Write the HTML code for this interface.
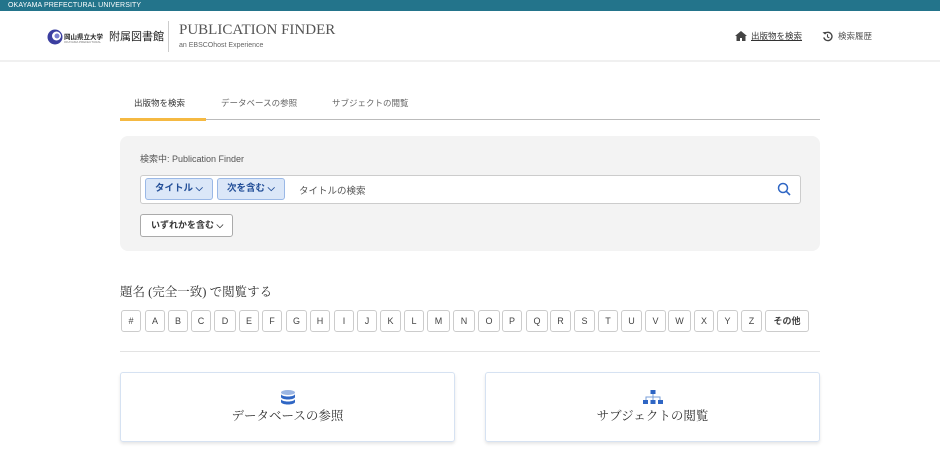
<!DOCTYPE html>
<html><head><meta charset="utf-8"><style>
*{box-sizing:border-box;margin:0;padding:0}
body{width:940px;height:460px;overflow:hidden;background:#fff;font-family:"Liberation Sans","Noto Sans CJK JP",sans-serif;color:#333;position:relative}
.top{height:11px;background:#23748b;color:#fff;font-size:7px;line-height:11px;padding-left:8px;letter-spacing:.1px}
.hdr{position:absolute;top:11px;left:0;width:940px;height:51px;border-bottom:2px solid #f0f0f0}
.ab{position:absolute}
.lt{position:absolute;top:310px;height:22px;border:1px solid #ccc;border-radius:3px;font-size:9px;color:#444;line-height:20px;text-align:center}
.pill{position:absolute;top:178px;height:22px;background:#dbe7f8;border:1px solid #9ab8e6;border-radius:3px;font-size:9.5px;color:#234f98;font-weight:bold;line-height:20px;padding-left:9px}
.card{position:absolute;top:372px;height:70px;border:1px solid #d6e2f2;border-radius:3px;box-shadow:0 2px 3px rgba(0,0,0,.1);text-align:center;font-family:"Liberation Serif","Noto Serif CJK SC",serif;font-size:12.5px;color:#333}
</style></head><body>
<div class="top">OKAYAMA PREFECTURAL UNIVERSITY</div>
<div class="hdr">
 <svg class="ab" style="left:47px;top:18px" width="16" height="16"><circle cx="8" cy="8" r="7.5" fill="#3b3ea0"/><circle cx="9.5" cy="7" r="4.5" fill="#fff"/><circle cx="10" cy="7" r="2.5" fill="#7a7fd0"/></svg>
 <div class="ab" style="left:64px;top:20px;font-size:6.5px;font-weight:bold;color:#222;white-space:nowrap">岡山県立大学</div>
 <div class="ab" style="left:64px;top:29px;font-size:3px;color:#777;white-space:nowrap">OKAYAMA PREFECTURAL</div>
 <div class="ab" style="left:109px;top:17px;font-size:11px;color:#222;white-space:nowrap">附属図書館</div>
 <div class="ab" style="left:168px;top:10px;width:1px;height:31px;background:#ccc"></div>
 <div class="ab" style="left:179px;top:11px;font-family:'Liberation Serif',serif;font-size:15px;color:#555;white-space:nowrap">PUBLICATION FINDER</div>
 <div class="ab" style="left:179px;top:31px;font-size:7px;color:#666">an EBSCOhost Experience</div>
 <svg class="ab" style="left:735px;top:20px" width="12" height="10" viewBox="0 0 12 10"><path d="M6 0L0 5h1.5v5h3.5V7h2v3h3.5V5H12z" fill="#444"/></svg>
 <div class="ab" style="left:751px;top:19px;font-size:8.5px;color:#333;text-decoration:underline">出版物を検索</div>
 <svg class="ab" style="left:822px;top:20px" width="11" height="11" viewBox="0 0 12 12"><path d="M3 3A4.5 4.5 0 1 1 2 7" stroke="#444" stroke-width="1.5" fill="none"/><path d="M0.5 1.5L3.5 4L4 1z" fill="#444"/><path d="M6 3.5V6.5L8 7.5" stroke="#444" stroke-width="1.2" fill="none"/></svg>
 <div class="ab" style="left:838px;top:19px;font-size:8.5px;color:#555">検索履歴</div>
</div>
<div class="ab" style="left:134px;top:97px;font-size:8.5px;color:#333">出版物を検索</div>
<div class="ab" style="left:221px;top:97px;font-size:8.5px;color:#666">データベースの参照</div>
<div class="ab" style="left:332px;top:97px;font-size:8.5px;color:#666">サブジェクトの閲覧</div>
<div class="ab" style="left:120px;top:119px;width:700px;height:1px;background:#bbb"></div>
<div class="ab" style="left:120px;top:118px;width:86px;height:3px;background:#f5b942"></div>
<div class="ab" style="left:120px;top:136px;width:700px;height:115px;background:#f3f3f3;border-radius:8px"></div>
<div class="ab" style="left:140px;top:152px;font-size:9px;color:#555">検索中: Publication Finder</div>
<div class="ab" style="left:140px;top:175px;width:661px;height:29px;background:#fff;border:1px solid #ccc;border-radius:3px"></div>
<div class="pill" style="left:145px;width:68px">タイトル ⌵</div>
<div class="pill" style="left:217px;width:68px">次を含む ⌵</div>
<div class="ab" style="left:299px;top:183px;font-size:9.5px;color:#555">タイトルの検索</div>
<svg class="ab" style="left:777px;top:182px" width="14" height="14" viewBox="0 0 14 14"><circle cx="6" cy="6" r="4.5" stroke="#2f66c4" stroke-width="1.5" fill="none"/><path d="M9.3 9.3L13 13" stroke="#2f66c4" stroke-width="1.6"/></svg>
<div class="ab" style="left:140px;top:214px;width:93px;height:23px;background:#fff;border:1px solid #aaa;border-radius:3px;font-size:9px;font-weight:bold;color:#333;line-height:21px;padding-left:10px">いずれかを含む ⌵</div>
<div class="ab" style="left:120px;top:282px;font-family:'Liberation Serif','Noto Serif CJK SC',serif;font-size:12.5px;color:#333">題名 (完全一致) で閲覧する</div>
<div class="lt" style="left:121px;width:20px">#</div>
<div class="lt" style="left:145px;width:20px">A</div>
<div class="lt" style="left:168px;width:20px">B</div>
<div class="lt" style="left:191px;width:20px">C</div>
<div class="lt" style="left:214px;width:22px">D</div>
<div class="lt" style="left:239px;width:20px">E</div>
<div class="lt" style="left:262px;width:20px">F</div>
<div class="lt" style="left:286px;width:21px">G</div>
<div class="lt" style="left:310px;width:20px">H</div>
<div class="lt" style="left:334px;width:20px">I</div>
<div class="lt" style="left:357px;width:20px">J</div>
<div class="lt" style="left:380px;width:21px">K</div>
<div class="lt" style="left:404px;width:20px">L</div>
<div class="lt" style="left:427px;width:23px">M</div>
<div class="lt" style="left:453px;width:22px">N</div>
<div class="lt" style="left:478px;width:22px">O</div>
<div class="lt" style="left:502px;width:20px">P</div>
<div class="lt" style="left:526px;width:22px">Q</div>
<div class="lt" style="left:550px;width:21px">R</div>
<div class="lt" style="left:574px;width:21px">S</div>
<div class="lt" style="left:598px;width:20px">T</div>
<div class="lt" style="left:621px;width:21px">U</div>
<div class="lt" style="left:645px;width:21px">V</div>
<div class="lt" style="left:668px;width:23px">W</div>
<div class="lt" style="left:694px;width:20px">X</div>
<div class="lt" style="left:717px;width:21px">Y</div>
<div class="lt" style="left:741px;width:21px">Z</div>
<div class="lt" style="left:765px;width:44px;font-weight:bold">その他</div>
<div class="ab" style="left:120px;top:351px;width:700px;height:1px;background:#e3e3e3"></div>
<div class="card" style="left:120px;width:335px">
 <svg style="position:absolute;left:160px;top:17px" width="14" height="15" viewBox="0 0 14 15"><ellipse cx="7" cy="2.5" rx="7" ry="2.5" fill="#9bb6e3"/><path d="M0 4v3c0 1.4 3.1 2.5 7 2.5s7-1.1 7-2.5V4c0 1.4-3.1 2.5-7 2.5S0 5.4 0 4z" fill="#2f66c4"/><path d="M0 9v3c0 1.4 3.1 2.5 7 2.5s7-1.1 7-2.5V9c0 1.4-3.1 2.5-7 2.5S0 10.4 0 9z" fill="#2f66c4"/></svg>
 <div style="position:absolute;left:0;right:0;top:33px">データベースの参照</div>
</div>
<div class="card" style="left:485px;width:335px">
 <svg style="position:absolute;left:157px;top:17px" width="20" height="15" viewBox="0 0 20 15"><rect x="7.5" y="0" width="5" height="4" fill="#2f66c4"/><path d="M10 4v3M3 10V7h14v3M10 7v3" stroke="#7a9fd8" fill="none"/><rect x="0" y="10" width="5" height="4" fill="#2f66c4"/><rect x="7.5" y="10" width="5" height="4" fill="#2f66c4"/><rect x="15" y="10" width="5" height="4" fill="#2f66c4"/></svg>
 <div style="position:absolute;left:0;right:0;top:33px">サブジェクトの閲覧</div>
</div>
</body></html>
